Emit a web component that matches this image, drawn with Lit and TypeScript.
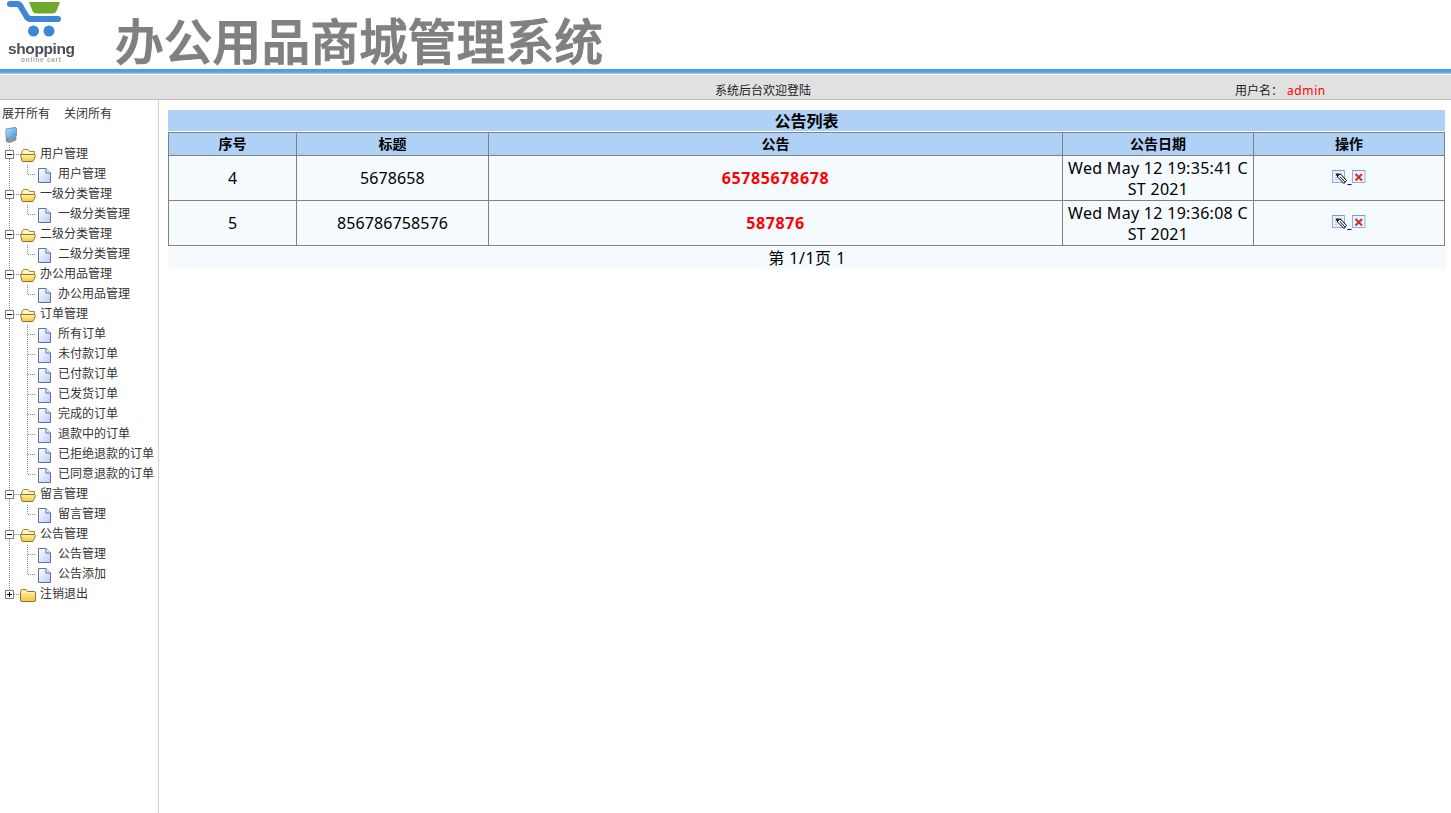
import { LitElement, html, css, svg } from "lit";
import { customElement } from "lit/decorators.js";

const tree: { label: string; children: string[]; closed?: boolean }[] = [
  { label: "用户管理", children: ["用户管理"] },
  { label: "一级分类管理", children: ["一级分类管理"] },
  { label: "二级分类管理", children: ["二级分类管理"] },
  { label: "办公用品管理", children: ["办公用品管理"] },
  { label: "订单管理", children: ["所有订单", "未付款订单", "已付款订单", "已发货订单", "完成的订单", "退款中的订单", "已拒绝退款的订单", "已同意退款的订单"] },
  { label: "留言管理", children: ["留言管理"] },
  { label: "公告管理", children: ["公告管理", "公告添加"] },
  { label: "注销退出", children: [], closed: true },
];

const rows = [
  { id: "4", title: "5678658", text: "65785678678", date: "Wed May 12 19:35:41 CST 2021" },
  { id: "5", title: "856786758576", text: "587876", date: "Wed May 12 19:36:08 CST 2021" },
];

const dot = "#8a8a8a";
const vLine = (y2 = 20) => svg`<line x1="9.5" y1="0" x2="9.5" y2=${y2} stroke=${dot} stroke-dasharray="1 1"/>`;

const cell = (content: unknown) => html`<svg class="cell" width="18" height="20" viewBox="0 0 18 20">${content}</svg>`;

const toggle = (closed: boolean, last: boolean) =>
  cell(svg`
    ${last ? svg`<line x1="9.5" y1="0" x2="9.5" y2="5" stroke=${dot} stroke-dasharray="1 1"/>` : vLine()}
    <line x1="14" y1="9.5" x2="18" y2="9.5" stroke=${dot} stroke-dasharray="1 1"/>
    <rect x="5.5" y="5.5" width="8" height="8" fill="#fff" stroke="#808080"/>
    <line x1="7" y1="9.5" x2="12" y2="9.5" stroke="#000"/>
    ${closed ? svg`<line x1="9.5" y1="7" x2="9.5" y2="12" stroke="#000"/>` : ""}
  `);

const folderOpen = cell(svg`
  <line x1="0" y1="9.5" x2="2" y2="9.5" stroke=${dot} stroke-dasharray="1 1"/>
  <path d="M3.5 9 L4.5 5.5 Q5 4.5 6 4.5 H10 L11.5 6.5 H16.5 V10 H5 Z" fill="#fff6c4" stroke="#a08a3a"/>
  <path d="M2.5 9.5 H15 Q17.5 9.5 17.5 10.5 L15.5 15.5 Q15.3 16.5 14 16.5 H5 Q4 16.5 3.7 15.5 Z" fill="url(#fold)" stroke="#8d7426"/>
`);

const folderClosed = cell(svg`
  <line x1="0" y1="9.5" x2="2" y2="9.5" stroke=${dot} stroke-dasharray="1 1"/>
  <path d="M2.5 15 V6.5 Q2.5 4.5 4.5 4.5 H8 L9.5 6.5 H16 Q17.5 6.5 17.5 8 V15 Q17.5 16.5 16 16.5 H4 Q2.5 16.5 2.5 15 Z" fill="url(#fold)" stroke="#8d7426"/>
  <path d="M3.5 7.5 H16.5" stroke="#fff6c8"/>
`);

const page = cell(svg`
  <path d="M2.5 3.5 H10 L14.5 8 V17.5 H2.5 Z" fill="url(#doc)" stroke="#5f6fae"/>
  <path d="M10 3.5 V8 H14.5" fill="#eef3ff" stroke="#5f6fae"/>
`);

const join = (last: boolean) =>
  cell(svg`
    <line x1="9.5" y1="0" x2="9.5" y2=${last ? 10 : 20} stroke=${dot} stroke-dasharray="1 1"/>
    <line x1="10" y1="9.5" x2="18" y2="9.5" stroke=${dot} stroke-dasharray="1 1"/>
  `);

const editIcon = html`<svg class="act" width="15" height="16" viewBox="0 0 15 16">
  <rect x=".5" y="1.5" width="12" height="12" fill="#eaf1fc" stroke="#8fb0e6"/>
  <path d="M1 1.5 H12" stroke="#5f83cc" stroke-dasharray="1 1"/>
  <path d="M3 4.5 H10 M3 6.5 H10 M3 8.5 H5 M3 10.5 H5" stroke="#b4c0d6"/>
  <path d="M4.5 5 L9 5.5 L14.5 11.5 L12 14.5 L6 8.5 Z" fill="#fff" stroke="#000"/>
  <path d="M5 5.5 L6.8 6 L5.6 7.4 Z" fill="#000" stroke="#000" stroke-width=".6"/>
  <path d="M8 7.6 L12.8 12.8" stroke="#000"/>
</svg>`;

const delIcon = html`<svg class="act" width="14" height="16" viewBox="0 0 14 16">
  <rect x=".5" y="1.5" width="12.5" height="12" fill="#eef4fd" stroke="#8fb0e6"/>
  <path d="M1 1.5 H13" stroke="#5f83cc" stroke-dasharray="1 1"/>
  <path d="M3.5 5 L10 11.5 M10 5 L3.5 11.5" stroke="#d42a2a" stroke-width="2"/>
</svg>`;

@customElement("app-root")
export class AppRoot extends LitElement {
  static styles = css`
    :host {
      display: flex;
      flex-direction: column;
      height: 813px;
      overflow: hidden;
      background: #fff;
      font-family: "Noto Sans", "Noto Sans CJK SC", sans-serif;
      color: #000;
    }
    .defs {
      position: absolute;
      width: 0;
      height: 0;
    }
    .head {
      height: 69px;
      flex: none;
      display: flex;
      align-items: flex-start;
    }
    .logo {
      width: 84px;
      height: 69px;
      flex: none;
      filter: blur(0.4px);
    }
    .title {
      margin: 8px 0 0 31px;
      font-size: 48.8px;
      line-height: 66px;
      font-weight: 500;
      color: #808080;
      -webkit-text-stroke: 1px #808080;
      white-space: nowrap;
    }
    .rule {
      height: 5px;
      flex: none;
      background: linear-gradient(#4f97e0, #5aa2e6 60%, #a9cff2);
    }
    .bar {
      height: 24px;
      flex: none;
      margin-top: 1px;
      background: #e1e1e1;
      border-bottom: 1px solid #bdbdbd;
      display: grid;
      grid-template-columns: 715px 520px 52px 1fr;
      align-items: end;
      line-height: 16px;
      font-size: 12px;
      color: #222;
    }
    .admin {
      color: #f00;
      letter-spacing: 0.6px;
    }
    .body {
      flex: 1;
      display: flex;
      min-height: 0;
    }
    .side {
      width: 158px;
      flex: none;
      border-right: 1px solid #d4d4d4;
      font-size: 12px;
      color: #333;
      padding-top: 5px;
      white-space: nowrap;
    }
    .links {
      display: flex;
      gap: 14px;
      height: 20px;
      line-height: 18px;
      padding-left: 2px;
    }
    .row {
      display: flex;
      height: 20px;
      align-items: center;
    }
    .cell {
      display: block;
      flex: none;
    }
    .label {
      margin-left: 4px;
      line-height: 20px;
      margin-top: -2px;
    }
    .main {
      flex: 1;
      min-width: 0;
      padding: 10px 6px 0 9px;
    }
    .cap {
      height: 21px;
      line-height: 22px;
      background: #aed1f5;
      text-align: center;
      font-size: 16px;
      font-weight: 700;
      margin-bottom: 1px;
    }
    table {
      width: 1277px;
      table-layout: fixed;
      border-collapse: collapse;
      border: 1px solid #808080;
    }
    th,
    td {
      border: 1px solid #808080;
      padding: 1px;
      text-align: center;
      word-break: break-all;
      font-weight: 400;
    }
    th {
      background: #aed1f5;
      font-size: 14px;
      font-weight: 700;
      line-height: 20px;
    }
    td {
      background: #f5faff;
      font-size: 16px;
      line-height: 21px;
    }
    td.notice {
      color: #f00;
      font-weight: 700;
      font-size: 16px;
      letter-spacing: 0.6px;
    }
    td.date {
      padding: 2px 1px 0;
      letter-spacing: 0.3px;
    }
    td.num {
      letter-spacing: 0.1px;
    }
    .col1 { width: 128px; }
    .col2 { width: 192px; }
    .col3 { width: 574px; }
    .col4 { width: 191px; }
    .ops {
      vertical-align: top;
      padding-top: 13px;
      line-height: 16px;
    }
    .ops a {
      color: #00f;
      text-decoration: underline;
    }
    .act {
      vertical-align: -2px;
    }
    .pager {
      margin-top: 1px;
      height: 22px;
      line-height: 23px;
      background: #f5faff;
      text-align: center;
      font-size: 16px;
      letter-spacing: 0.5px;
      width: 1278px;
    }
  `;

  render() {
    return html`
      <svg class="defs" aria-hidden="true">
        <defs>
          <linearGradient id="fold" x1="0" y1="0" x2="0" y2="1">
            <stop offset="0" stop-color="#fff2a8" />
            <stop offset="1" stop-color="#f5c63c" />
          </linearGradient>
          <linearGradient id="doc" x1="0" y1="0" x2="1" y2="1">
            <stop offset="0" stop-color="#ffffff" />
            <stop offset="1" stop-color="#bccdf4" />
          </linearGradient>
          <linearGradient id="screen" x1="0" y1="0" x2="1" y2="1">
            <stop offset="0" stop-color="#bfe6ff" />
            <stop offset="1" stop-color="#2f8fe8" />
          </linearGradient>
        </defs>
      </svg>
      <div class="head">
        <svg class="logo" viewBox="0 0 84 69">
          <path d="M10 4 H17 Q20 4 21.5 8 L26 15.5 Q27.5 19 31 19 H58" fill="none" stroke="#3f86d8" stroke-width="6" stroke-linecap="round"/>
          <path d="M29 2 H60 L56.5 11 Q55.5 13.5 52 13.5 H37 Q33.5 13.5 32.5 11 Z" fill="#6fa82c"/>
          <circle cx="33.5" cy="31" r="5.5" fill="#3f86d8"/>
          <circle cx="49" cy="31" r="5.5" fill="#3f86d8"/>
          <text x="8" y="54" font-size="15.5" font-weight="700" fill="#4a4f5a" font-family="Liberation Sans, sans-serif" textLength="67">shopping</text>
          <text x="21" y="62" font-size="6.5" font-weight="700" fill="#a5a5a5" font-family="Liberation Sans, sans-serif" textLength="40">online cart</text>
        </svg>
        <div class="title">办公用品商城管理系统</div>
      </div>
      <div class="rule"></div>
      <div class="bar">
        <span></span>
        <span>系统后台欢迎登陆</span>
        <span>用户名：</span>
        <span class="admin">admin</span>
      </div>
      <div class="body">
        <aside class="side">
          <div class="links"><span>展开所有</span><span>关闭所有</span></div>
          <div class="row">
            <svg class="cell" width="18" height="20" viewBox="0 0 18 20">
              <path d="M6 4 L15 2.5 Q16.5 2.5 16.5 4 V11 L7.5 13.5 Q6 13 6 12 Z" fill="url(#screen)" stroke="#8494ac"/>
              <path d="M6.5 13 L9 14 L16 12 V15 L10 17.5 Q7 17.5 6 16 Z" fill="#8b96a8" stroke="#5f6c80" stroke-width=".6"/>
            </svg>
          </div>
          ${tree.map(
            (g, i) => html`
              <div class="row">
                ${toggle(!!g.closed, i === tree.length - 1)}
                ${g.closed ? folderClosed : folderOpen}
                <span class="label">${g.label}</span>
              </div>
              ${g.children.map(
                (c, j) => html`
                  <div class="row">
                    ${cell(vLine())}
                    ${join(j === g.children.length - 1)}
                    ${page}
                    <span class="label">${c}</span>
                  </div>
                `
              )}
            `
          )}
        </aside>
        <main class="main">
          <div class="cap">公告列表</div>
          <table>
            <colgroup>
              <col class="col1" /><col class="col2" /><col class="col3" /><col class="col4" /><col />
            </colgroup>
            <thead>
              <tr><th>序号</th><th>标题</th><th>公告</th><th>公告日期</th><th>操作</th></tr>
            </thead>
            <tbody>
              ${rows.map(
                (r) => html`
                  <tr>
                    <td>${r.id}</td>
                    <td class="num">${r.title}</td>
                    <td class="notice">${r.text}</td>
                    <td class="date">${r.date}</td>
                    <td class="ops"><a href="#">${editIcon} </a><a href="#">${delIcon}</a></td>
                  </tr>
                `
              )}
            </tbody>
          </table>
          <div class="pager">第 1/1页 1</div>
        </main>
      </div>
    `;
  }
}
